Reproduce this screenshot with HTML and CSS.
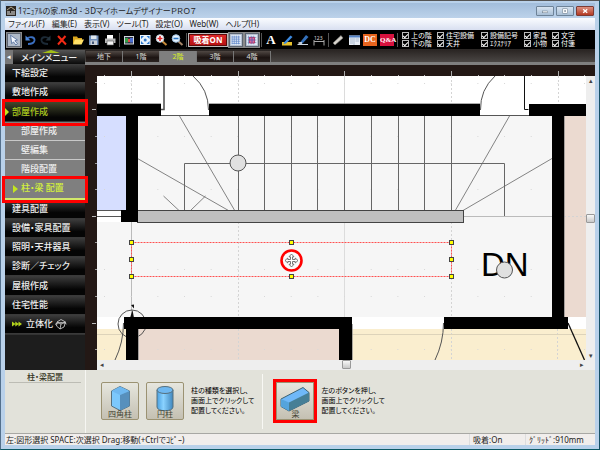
FILE: index.html
```html
<!DOCTYPE html>
<html lang="ja">
<head>
<meta charset="utf-8">
<title>3DマイホームデザイナーPRO7</title>
<link rel="stylesheet" href="styles.css">
</head>
<body>
<div class="window">
  <header class="titlebar">
    <svg class="app-icon" viewBox="0 0 10 10"><rect width="10" height="10" fill="#2b2622"/><path d="M1 4l4-3 4 3" stroke="#b8a88a" fill="none"/><path d="M1 6h3M5 6h4M1 8h8" stroke="#eee"/></svg>
    <h1>1ﾏﾆｭｱﾙの家.m3d - ３DマイホームデザイナーＰＲＯ７</h1>
    <div class="win-buttons">
      <button aria-label="最小化"><svg viewBox="0 0 17 9"><rect x="5.5" y="4.500" width="6" height="2" fill="#fff" stroke="#678" stroke-width=".6"/></svg></button>
      <button aria-label="最大化"><svg viewBox="0 0 17 9"><rect x="6" y="2" width="5.500" height="5" fill="#fff" stroke="#678" stroke-width=".6"/><rect x="7.600" y="3.800" width="2" height="1.400" fill="#678"/></svg></button>
      <button class="close" aria-label="閉じる"><svg viewBox="0 0 17 9"><path d="M6.500 2.500l4.500 4M11 2.500l-4.500 4" stroke="#fff" stroke-width="1.600"/></svg></button>
    </div>
  </header>

  <nav class="menubar">
    <a href="#">ファイル(F)</a><a href="#">編集(E)</a><a href="#">表示(V)</a><a href="#">ツール(T)</a><a href="#">設定(O)</a><a href="#">Web(W)</a><a href="#">ヘルプ(H)</a>
  </nav>

  <div class="toolbar">
    <button class="tool boxed" aria-label="選択"><svg viewBox="0 0 14 14"><path d="M3 1.500l8 5.500-3 .8 3 3.600-1.800 1.400-2.800-3.700-2 2.200z" fill="#f4f8ff" stroke="#37598f" stroke-width=".8"/></svg></button>
    <button class="tool" aria-label="元に戻す"><svg viewBox="0 0 14 14"><path d="M4 5.500c3-2.500 8-1.500 7.500 2C11 10.500 8 11 5 11" fill="none" stroke="#3b6fc0" stroke-width="1.800"/><path d="M2.500 2.500v5h5z" fill="#4d86d8"/></svg></button>
    <button class="tool" aria-label="やり直し"><svg viewBox="0 0 14 14"><path d="M10 5.500C7 3 2 4 2.500 7.500 3 10.500 6 11 9 11" fill="none" stroke="#1c2a36" stroke-width="1.800"/><path d="M11.500 2.500v5h-5z" fill="#24343f"/></svg></button>
    <button class="tool" aria-label="削除"><svg viewBox="0 0 14 14"><path d="M3 3l8 8.500M10.500 3L3 11.500" stroke="#f32a15" stroke-width="2"/></svg></button>
    <button class="tool" aria-label="開く"><svg viewBox="0 0 14 14"><path d="M2 11V3.500h4l1 1.500h4v2" fill="#d9a51c"/><path d="M2 11.500L4 6.500h9l-2.500 5z" fill="#ffe067"/></svg></button>
    <button class="tool" aria-label="保存"><svg viewBox="0 0 14 14"><path d="M2 2.500h9.500V12H2z" fill="#6e8db8"/><path d="M4 2.500h5.500v3.500H4z" fill="#dfe7ef"/><path d="M3.500 7.500h6.500V12H3.500z" fill="#c9cfd6"/><path d="M5 8.500h2V11H5z" fill="#45597a"/></svg></button>
    <button class="tool" aria-label="印刷"><svg viewBox="0 0 14 14"><path d="M4 2h6v4H4z" fill="#fff"/><path d="M2 5.500h10.500v4.500H2z" fill="#b9b9b9"/><path d="M4 8h6.500v4H4z" fill="#f4f4f4" stroke="#555" stroke-width=".6"/></svg></button>
    <span class="sep"></span>
    <button class="tool" aria-label="画面移動"><svg viewBox="0 0 14 14"><path d="M2 3h10v8.500H2z" fill="#cfd6dc"/><path d="M3 4h8v6.500H3z" fill="#334"/><path d="M3 5h3v4.500H3z" fill="#35a045"/><path d="M8 5h3v4.500H8z" fill="#4c6ed0"/><path d="M6 6h2v3H6z" fill="#e04a4a"/></svg></button>
    <button class="tool" aria-label="全体表示"><svg viewBox="0 0 14 14"><path d="M2 2h10.500v10H2z" fill="#e9f3fc"/><path d="M3 3h3L3 6zM11.500 3v3l-3-3zM3 11V8l3 3zM11.500 11h-3l3-3z" fill="#2d78cc"/><circle cx="7.200" cy="7" r="1.500" fill="#2d78cc"/></svg></button>
    <button class="tool" aria-label="拡大"><svg viewBox="0 0 14 14"><path d="M8 8l4.500 4" stroke="#c88c3a" stroke-width="2"/><circle cx="6" cy="5.500" r="3.800" fill="#fff" stroke="#b8c4d0"/><path d="M6 3v5M3.500 5.500h5" stroke="#e0262a" stroke-width="1.600"/></svg></button>
    <button class="tool" aria-label="縮小"><svg viewBox="0 0 14 14"><path d="M8 8l4.500 4" stroke="#a8886a" stroke-width="2"/><circle cx="6" cy="5.500" r="3.800" fill="#e8f4ff" stroke="#9fc0de"/><path d="M3.500 5.500h5" stroke="#2874c4" stroke-width="1.600"/></svg></button>
    <span class="sep"></span>
    <button class="snap">吸着ON</button>
    <button class="tool boxed" aria-label="グリッド"><svg viewBox="0 0 14 14"><path d="M1 1h12v12H1z" fill="#dfe9f6"/><path d="M2.500 2v10M5 2v10M7.500 2v10M10 2v10M2 3.500h10M2 6h10M2 8.500h10M2 11h10" stroke="#5e86c8" stroke-width=".8"/></svg></button>
    <button class="tool boxed" aria-label="グリッド吸着"><svg viewBox="0 0 14 14"><path d="M1 1h12v12H1z" fill="#dfe9f6"/><path d="M3 2v10M6 2v10M9 2v10M2 4h10M2 7h10M2 10h10" stroke="#6886b8" stroke-width=".8"/><path d="M4 4h6v6.500H4z" fill="#d96a9a" stroke="#b32e5e"/><path d="M7 3v8M3.500 7h7" stroke="#5b5bb0"/></svg></button>
    <span class="sep"></span>
    <button class="tool letter" aria-label="文字">A</button>
    <button class="tool" aria-label="塗り"><svg viewBox="0 0 14 14"><path d="M2 9h10v3.500H2z" fill="#e8c22e"/><path d="M4 9.500l6.500-7L12.500 4 6 10.500 3.500 11z" fill="#3e8be0"/></svg></button>
    <button class="tool" aria-label="線"><svg viewBox="0 0 14 14"><path d="M1.500 11.500h10.500" stroke="#ccd6e0"/><path d="M4 9.500l6-7.500 2.500 2L6.500 10.500 3.500 11z" fill="#3471bb"/><path d="M2.500 10h3.500" stroke="#eee" stroke-width="1.500"/></svg></button>
    <button class="tool" aria-label="寸法"><svg viewBox="0 0 14 14"><path d="M2 12.500V7M12 12.500V7M2 8.500h10" stroke="#aaa" fill="none"/><text x="2" y="6.500" class="dim-text">123</text></svg></button>
    <span class="sep"></span>
    <button class="tool" aria-label="計測"><svg viewBox="0 0 14 14"><path d="M2 10l8-7.500 2 2.500-8 7z" fill="#d8d4cc" stroke="#777" stroke-width=".6"/></svg></button>
    <button class="tool" aria-label="部品一覧"><svg viewBox="0 0 14 14"><path d="M2 2.500h11V12H2z" fill="#e8eef6"/><path d="M2 2.500h11v2H2z" fill="#5583c6"/><path d="M3 6h3M3 8h3M3 10h3M8.500 6H12M8.500 8H12M7 5v7" stroke="#91a4bd" stroke-width=".7"/></svg></button>
    <button class="badge dc">DC</button>
    <button class="badge qa">Q&amp;A</button>
    <span class="sep"></span>
    <div class="filters">
      <label><input type="checkbox" checked>上の階</label><label><input type="checkbox" checked>住宅設備</label><label><input type="checkbox" checked>設備記号</label><label><input type="checkbox" checked>家具</label><label><input type="checkbox" checked>文字</label>
      <label><input type="checkbox" checked>下の階</label><label><input type="checkbox" checked>天井</label><label><input type="checkbox" checked>ｴｸｽﾃﾘｱ</label><label><input type="checkbox" checked>小物</label><label><input type="checkbox" checked>付箋</label>
    </div>
  </div>

  <div class="workspace">
    <aside class="sidebar">
      <div class="side-head"><button aria-label="たたむ">◂</button><h2>メインメニュー</h2></div>
      <ul class="side-list">
        <li><a href="#">下絵設定</a></li>
        <li><a href="#">敷地作成</a></li>
        <li class="open marked"><a href="#">部屋作成</a></li>
        <li class="sub"><a href="#">部屋作成</a></li>
        <li class="sub"><a href="#">壁編集</a></li>
        <li class="sub"><a href="#">階段配置</a></li>
        <li class="sub current marked"><a href="#">柱・梁 配置</a></li>
        <li><a href="#">建具配置</a></li>
        <li><a href="#">設備・家具配置</a></li>
        <li><a href="#">照明・天井器具</a></li>
        <li><a href="#">診断／チェック</a></li>
        <li><a href="#">屋根作成</a></li>
        <li><a href="#">住宅性能</a></li>
        <li><a href="#"><svg class="arrows" viewBox="0 0 10 6"><path d="M0 .5l3.500 2.500L0 5.500zM3.300 .5L6.800 3 3.300 5.500zM6.500 .5L10 3 6.500 5.500z" fill="#b4d41c"/></svg>立体化<svg class="cube" viewBox="0 0 12 12"><path d="M2 4l4-2.500L10.500 4 9 9l-4 2-3.500-3zM2 4l4 2 4.500-2M6 6l-1 5M0 6.500C3 4 9 4 11.500 6" fill="none" stroke="#ddd" stroke-width=".8"/></svg></a></li>
      </ul>
      <div class="side-fill"></div>
    </aside>

    <main class="stage">
      <nav class="tabs">
        <button>地下</button><button>1階</button><button class="active">2階</button><button>3階</button><button>4階</button>
      </nav>
      <div class="board">
        <svg class="ruler-x" viewBox="85 65 510 11" preserveAspectRatio="xMinYMin slice">
          <path d="M131.500 71v5M238.500 71v5M344.500 71v5M451.500 71v5M558.500 71v5" stroke="#aaa"/>
          <path d="M104.500 75v1M158.500 75v1M184.500 75v1M211.500 75v1M264.500 75v1M291.500 75v1M318.500 75v1M371.500 75v1M398.500 75v1M424.500 75v1M478.500 75v1M504.500 75v1M531.500 75v1M584.500 75v1" stroke="#bbb"/>
        </svg>
        <svg class="ruler-y" viewBox="85 76 12 294" preserveAspectRatio="xMinYMin slice">
          <path d="M92 109.500h4M92 216.500h4M92 323.500h4" stroke="#bbb"/>
          <path d="M95 82.500h2M95 136.500h2M95 163.500h2M95 189.500h2M95 242.500h2M95 269.500h2M95 296.500h2M95 349.500h2" stroke="#999"/>
        </svg>
        <svg class="plan" viewBox="97 76 489 284" preserveAspectRatio="xMinYMin slice">
          <rect x="97" y="76" width="489" height="284" fill="#fff"/>
          <!-- rooms -->
          <rect x="97" y="116" width="29" height="94" fill="#d6deff"/>
          <path d="M137 116h415v201H97v-95h40z" fill="#f6f6f6"/>
          <rect x="564" y="116" width="22" height="201" fill="#ebdad0"/>
          <rect x="97" y="329" width="29" height="31" fill="#faeecf"/>
          <rect x="138" y="329" width="201" height="31" fill="#ebdad0"/>
          <rect x="352" y="329" width="234" height="31" fill="#faeecf"/>
          <!-- grid -->
          <path d="M131.500 76v28M238.500 76v28M451.500 76v28M558.500 76v28M238.500 222v95M451.500 222v95M238.500 329v31M451.500 329v31M557.500 329v31M564 216.500h22" stroke="#d4d4d4" stroke-dasharray="2 2"/>
          <path d="M344.500 76v28M344.500 222v95" stroke="#dcdcdc"/>
          <path d="M131.500 222v95M463 216.500h89" stroke="#bbb"/>
          <path d="M97 334.500h26M352 334.500h234" stroke="#ddd3ba"/>
          <path d="M104 296.500h448M104 269.500h448M104 189.500h448M104 136.500h448M104 349.500h482M104 83.500h482" stroke="#d8d8d8" stroke-dasharray="1 25.670"/>
          <!-- doors -->
          <g fill="none" stroke="#555">
            <path d="M164 76v33.500h-3" stroke-width="1.600"/>
            <path d="M193 76a45 45 0 0 1 15.500 34M161 115.500h48M480 115.500h49"/>
            <path d="M495 76a45 45 0 0 0-14.500 34"/>
            <path d="M524.500 76v33.500h4" stroke="#111"/>
            <path d="M123.500 323a85 85 0 0 1-8.500 37M443.500 323a85 85 0 0 1-8.500 37"/>
            <path d="M568 323l16.500 37" stroke="#111" stroke-width="1.300"/>
            <path d="M97 216.500h25M97 210.500h26" />
          </g>
          <!-- stairs -->
          <g fill="none" stroke="#666">
            <path d="M238.500 116v95M264.500 116v95M291.500 116v95M317.500 116v95M344.500 116v95M371.500 116v95M398.500 116v95M424.500 116v95M451.500 116v95"/>
            <path d="M184.500 210v-46.500h320V216"/>
            <path d="M179.500 116l55.500 95M137.500 158.500l91 52M163.500 196l15.500 14.500M205.500 196l-15 14.500M509.500 116l-54.500 95M552 158.500l-89 52" stroke-width=".8"/>
          </g>
          <rect x="137.500" y="210.500" width="326" height="12" fill="#c0c0c0" stroke="#444"/>
          <!-- compass -->
          <circle cx="132" cy="324" r="14" fill="none" stroke="#444" stroke-width=".9"/>
          <path d="M131 305l3 3.500v-4M130 318l2.500-8 1.500 8z" fill="#111"/>
          <!-- walls -->
          <path d="M97 104h64v12h-23v106h-17v-12h5v-94H97zM209 104h271v12H209zM529 104h57v12h-22v201h4v12H444v-12h108V116h-23zM124 317h228v43h-13v-31H138v31h-12v-31h-2z" fill="#000"/>
          <path d="M97 103.500h64M209 103.500h271M564.500 116v201M352.500 324v36M138.500 329v31" stroke="#888" stroke-width=".7"/>
          <text class="dn" x="481" y="276">DN</text>
          <g fill="#e0e0e0" stroke="#555"><circle cx="238" cy="163" r="8"/><circle cx="504.500" cy="270" r="8"/></g>
          <!-- selected beam -->
          <rect x="131.500" y="242.500" width="320" height="34" fill="none" stroke="#ff5050" stroke-dasharray="2 1"/>
          <g fill="#ff0" stroke="#444">
            <rect x="129.500" y="240.500" width="4" height="4"/><rect x="129.500" y="257.500" width="4" height="4"/><rect x="129.500" y="274.500" width="4" height="4"/>
            <rect x="289.500" y="240.500" width="4" height="4"/><rect x="289.500" y="274.500" width="4" height="4"/>
            <rect x="449.500" y="240.500" width="4" height="4"/><rect x="449.500" y="257.500" width="4" height="4"/><rect x="449.500" y="274.500" width="4" height="4"/>
          </g>
          <circle cx="291.500" cy="260.500" r="10" fill="#fafafa" stroke="#f00" stroke-width="2.600"/>
          <path d="M291.500 254l2.500 2.800h-1.500v2.700h2.700v-1.500l2.800 2.500-2.800 2.500v-1.500h-2.700v2.700h1.500l-2.500 2.800-2.500-2.800h1.500v-2.700h-2.700v1.500l-2.800-2.500 2.800-2.500v1.500h2.700v-2.700H289z" fill="#fff" stroke="#555" stroke-width=".8"/>
        </svg>
        <div class="scroll-y"><button aria-label="上へ">▴</button><span class="thumb"></span><button aria-label="下へ">▾</button></div>
        <div class="scroll-x"><button aria-label="左へ">◂</button><span class="thumb"></span><button aria-label="右へ">▸</button></div>
      </div>
    </main>
  </div>

  <section class="panel">
    <div class="panel-title"><h3>柱・梁配置</h3></div>
    <div class="group">
      <button class="part"><svg viewBox="0 0 38 30"><path d="M10.500 8L19 3.500 28.500 8v15L19 27.500 10.500 23z" fill="#7cc8fc" stroke="#56707e"/><path d="M10.500 8L19 3.500 28.500 8 19 12z" fill="#6fb8f0"/><path d="M19 12l9.500-4v15L19 27.500z" fill="#5790bd"/></svg><span>四角柱</span></button>
      <button class="part"><svg viewBox="0 0 38 30"><defs><linearGradient id="cyl"><stop offset="0" stop-color="#4aa0e0"/><stop offset=".4" stop-color="#8ad2ff"/><stop offset="1" stop-color="#3f86bd"/></linearGradient></defs><path d="M11 7v17c0 5 16 5 16 0V7z" fill="url(#cyl)" stroke="#56707e"/><ellipse cx="19" cy="7" rx="8" ry="3.500" fill="#6fb8f0" stroke="#56707e"/></svg><span>円柱</span></button>
      <p>柱の種類を選択し、<br>画面上でクリックして<br>配置してください。</p>
    </div>
    <div class="group">
      <button class="part picked"><svg viewBox="0 0 38 30"><path d="M5 16L27 4.500l6 5v8.500L13 28l-8-4.500z" fill="#6fb8f8" stroke="#3d6272"/><path d="M5 16l8 3.500V28l-8-4.500z" fill="#55a4dc"/><path d="M13 19.500l20-10v8.500L13 28z" fill="#467f96"/></svg><span>梁</span></button>
      <p>左のボタンを押し、<br>画面上でクリックして<br>配置してください。</p>
    </div>
  </section>

  <footer class="status">
    <span class="hint">左:図形選択 SPACE:次選択 Drag:移動(+Ctrlでｺﾋﾟｰ)</span><span class="snap-state">吸着:On</span><span class="grid-state">ｸﾞﾘｯﾄﾞ:910mm</span>
  </footer>
</div>
</body>
</html>
```
FILE: styles.css
```css
* { box-sizing: border-box; }

html, body { height: 100%; margin: 0; }

body {
  font-family: "Noto Sans", "Noto Sans CJK JP", sans-serif;
  font-size: 8px;
  line-height: 10px;
  color: #222;
  font-feature-settings: "palt";
}

h1, h2, h3, p, ul { margin: 0; padding: 0; font-weight: normal; font-size: inherit; }
ul { list-style: none; }
a { color: inherit; text-decoration: none; }
button { font: inherit; font-feature-settings: inherit; padding: 0; margin: 0; border: 0; background: none; color: inherit; }
svg { display: block; }

.window {
  min-height: 100%;
  display: flex;
  flex-direction: column;
  padding: 2px 4px 4px;
  background: #b9d1ea;
  border-top: 1px solid #555;
  border-right: 1px solid #164f63;
  border-bottom: 1px solid #0d5a66;
  border-left: 1px solid #54708c;
}

.titlebar {
  display: flex;
  align-items: center;
  height: 15px;
  gap: 2px;
  padding-left: 1px;
  background: linear-gradient(#a2bddb, #bcd2ea);
}
.titlebar h1 { flex: 1; white-space: nowrap; }
.app-icon { width: 10px; height: 10px; }
.win-buttons { display: flex; gap: 2px; align-self: flex-start; padding: 3px 1px 0 0; }
.win-buttons button {
  width: 18px; height: 10px;
  border: 1px solid #6e8398; border-radius: 1px;
  background: linear-gradient(#d7e3f0, #a9bfd6);
}
.win-buttons .close { background: linear-gradient(#dc9080, #b43a24); border-color: #7c3b34; }
.win-buttons svg { width: 100%; height: 100%; }

.menubar {
  display: flex;
  align-items: center;
  height: 12px;
  gap: 7px;
  padding-left: 3px;
  background: linear-gradient(#fafcff, #d8dff0);
}

.toolbar {
  display: flex;
  align-items: center;
  height: 20px;
  padding-left: 1px;
  background: #000;
  color: #fff;
  border-bottom: 1px solid #2c2826;
}
.tool { width: 16px; height: 16px; flex: none; display: flex; align-items: center; justify-content: center; }
.tool svg { width: 14px; height: 14px; }
.boxed { background: #aeb9c8; border: 1px solid #8a8a8a; box-shadow: inset 0 0 0 1px #5b6470; }
.boxed svg { width: 12px; height: 12px; }
.letter { font: bold 13px/16px "Liberation Serif", serif; }
.dim-text { font: 5px "Noto Sans", sans-serif; fill: #ddd; }
.sep { width: 1px; height: 14px; margin: 0 1px; background: #555; flex: none; }
.snap {
  width: 40px; height: 14px;
  border: 1px solid #bbb;
  box-shadow: inset 0 0 0 1px #5c0a0a;
  background: linear-gradient(#e02a2a, #b40f10);
  font-size: 8px; font-weight: bold; white-space: nowrap;
}
.badge { width: 14px; height: 12px; margin: 0 2px 0 1px; line-height: 12px; font-size: 8px; font-weight: bold; color: #fff; flex: none; font-family: "Liberation Serif", serif; text-align: center; }
.dc { background: #e8641e; }
.qa { background: #d8123e; font-size: 7px; }
.filters {
  display: grid;
  grid-template-columns: 35px 44px 43px 28px auto;
  grid-auto-rows: 8px;
  padding-left: 3px;
  font-size: 7px;
  line-height: 8px;
}
.filters label { display: flex; align-items: center; gap: 2px; white-space: nowrap; }
.filters input {
  appearance: none; margin: 0; width: 7px; height: 7px; flex: none;
  border: 1px solid #bbb; display: grid; place-items: center;
}
.filters input:checked::after {
  content: ""; width: 4px; height: 2px;
  border: solid #fff; border-width: 0 0 1px 1px; transform: rotate(-45deg);
}

.workspace { flex: 1; display: grid; grid-template-columns: 80px 1fr; min-height: 240px; }

.sidebar { display: flex; flex-direction: column; background: #1c1c1c; color: #eee; font-size: 9px; }
.side-head { display: flex; height: 14px; background: linear-gradient(#555, #0a0a0a); position: relative; }
.side-head button { width: 8px; background: #777; color: #fff; font-size: 7px; }
.side-head h2 { flex: 1; text-align: center; font-weight: 500; line-height: 16px; }
.side-head h2::before {
  content: ""; position: absolute; left: 37px; top: 0;
  border: solid transparent; border-width: 0 9px 3px; border-bottom-color: #a4c015;
}
.side-list { flex: 54; display: flex; flex-direction: column; }
.side-list li { flex: 1; position: relative; display: flex; background: linear-gradient(#3d3d3d, #050505 70%); border-bottom: 1px solid #3a3a3a; }
.side-list a { flex: 1; display: flex; align-items: center; padding-left: 7px; font-weight: 500; white-space: nowrap; }
.side-list .open { background: linear-gradient(#44492c, #050505 80%); color: #aac81e; }
.side-list .sub { background: #7f7f7f; border-bottom-color: #c8c8c8; }
.side-list .sub a { padding-left: 16px; }
.side-list .current { color: #d2f03c; border-bottom: 2px solid #d2e86a; }
.side-list .open::before, .side-list .current::before {
  content: ""; position: absolute; left: 0; top: 6px;
  border: solid transparent; border-width: 4px 0 4px 4px; border-left-color: #c4e61e;
}
.side-list .current::before { left: 8px; border-left-width: 5px; }
.marked { z-index: 1; }
.marked::after { content: ""; position: absolute; inset: -3px -3px -5px; border: 3px solid #f00; }
.side-fill { flex: 7; background: #1d1d1d; border-top: 1px solid #333; }
.arrows { width: 10px; height: 6px; margin-right: 4px; }
.cube { width: 12px; height: 12px; margin-left: 2px; }

.stage { display: flex; flex-direction: column; min-width: 0; }
.tabs { display: flex; height: 15px; padding: 1px 0 0 1px; background: linear-gradient(#2a2523, #4a4644); border-bottom: 3px solid #7f7f7f; }
.tabs button { width: 37px; border-right: 1px solid #777; background: linear-gradient(#504844, #1c1412 60%, #2b2422); color: #ddd; font-size: 7px; }
.tabs .active { background: #7f7f7f; color: #d8f020; }

.board {
  flex: 1;
  display: grid;
  grid-template-columns: 12px 1fr 9px;
  grid-template-rows: 11px 1fr 10px;
  background: #231815;
  min-height: 0;
}
.board svg { width: 100%; height: 100%; min-height: 0; min-width: 0; }
.ruler-x { grid-area: 1 / 1 / 2 / 4; }
.ruler-y { grid-area: 2 / 1 / 4 / 2; }
.plan { grid-area: 2 / 2 / 3 / 3; }
.scroll-y { grid-area: 2 / 3 / 4 / 4; display: flex; flex-direction: column; justify-content: space-between; background: #eee; padding-bottom: 10px; }
.scroll-x { grid-area: 3 / 2 / 4 / 3; display: flex; justify-content: space-between; background: #eee; }
.scroll-x button, .scroll-y button { width: 9px; height: 9px; font-size: 7px; line-height: 9px; color: #444; }
.thumb { width: 9px; height: 9px; border: 1px solid #999; border-radius: 1px; background: linear-gradient(#f8f8f8, #c8c8c8); }
.scroll-x .thumb { margin-left: 9px; }
.dn { font: 33px "Liberation Sans", sans-serif; fill: #000; }

.panel { display: flex; height: 64px; background: #e2e2da; border-bottom: 1px solid #a8a8a4; }
.panel-title { width: 81px; padding: 2px 4px 0; border-right: 1px solid #f6f6f2; }
.panel-title h3 { text-align: center; font-weight: 500; border-bottom: 1px solid #bcbcb4; font-size: 8px; color: #332; }
.group { display: flex; gap: 7px; padding: 12px 8px 13px 15px; }
.group + .group { position: relative; padding-left: 14px; }
.group + .group::before { content: ""; position: absolute; left: 0; top: 4px; bottom: 4px; border-left: 1px solid #f8f8f4; }
.part {
  width: 38px; height: 38px;
  display: flex; flex-direction: column; align-items: center;
  border: 1px solid #9b9272; border-radius: 2px;
  background: linear-gradient(#e6e6de, #c4c0b2);
  line-height: 8px;
}
.part svg { width: 38px; height: 30px; margin: 0 -1px -1px; flex: none; }
.part span { margin-top: -2px; color: #443; }
.picked { outline: 3px solid #f00; border-radius: 0; }
.group p { font-size: 7px; line-height: 10px; white-space: nowrap; padding-top: 4px; color: #000; }

.status { display: flex; height: 11px; background: #f1eeec; line-height: 11px; white-space: nowrap; }
.hint { flex: 1; padding-left: 1px; }
.snap-state { width: 56px; padding-left: 3px; border-left: 1px solid #ddd; }
.grid-state { width: 70px; padding-left: 3px; border-left: 1px solid #ddd; }
```
